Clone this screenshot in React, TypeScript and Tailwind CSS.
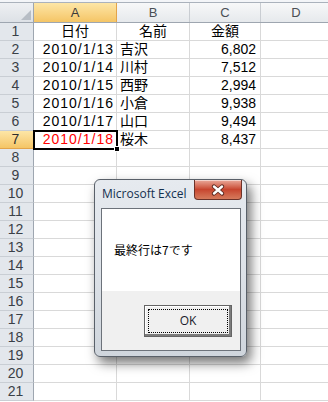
import React from "react";

// Excel 2010 sheet with a Win7-basic MsgBox on top.

const COLS = [
  { key: "A", w: "w-[83px]" },
  { key: "B", w: "w-[73px]" },
  { key: "C", w: "w-[71px]" },
  { key: "D", w: "w-[71px]" },
];

type Row = { date?: string; name?: string; amount?: string; head?: boolean };

const ROWS: Row[] = [
  { date: "日付", name: "名前", amount: "金額", head: true },
  { date: "2010/1/13", name: "吉沢", amount: "6,802" },
  { date: "2010/1/14", name: "川村", amount: "7,512" },
  { date: "2010/1/15", name: "西野", amount: "2,994" },
  { date: "2010/1/16", name: "小倉", amount: "9,938" },
  { date: "2010/1/17", name: "山口", amount: "9,494" },
  { date: "2010/1/18", name: "桜木", amount: "8,437" },
];

const jp = "font-['Liberation_Sans','Noto_Sans_CJK_JP',sans-serif]";

function ColumnHeader() {
  return (
    <div className="flex h-[20px] border-b border-[#9ea6b0]">
      <div className="w-[34px] shrink-0 border-r border-[#9ea6b0] bg-gradient-to-b from-[#eef0f3] to-[#dde1e6] flex items-end justify-end p-[2px]">
        <svg width="10" height="10" viewBox="0 0 10 10">
          <polygon points="10,0 10,10 0,10" fill="#b7bdc5" />
        </svg>
      </div>
      {COLS.map((c) => (
        <div
          key={c.key}
          className={`${c.w} shrink-0 border-r flex items-center justify-center text-[13px] ${
            c.key === "A"
              ? "border-[#e3a44a] bg-gradient-to-b from-[#fde6a6] to-[#f5c565] text-[#3a3a3a]"
              : "border-[#c9cdd2] bg-gradient-to-b from-[#f7f8f9] to-[#e6e9ec] text-[#4a4f55]"
          } font-['Liberation_Sans',sans-serif]`}
        >
          {c.key}
        </div>
      ))}
    </div>
  );
}

function SheetRow({ n, row }: { n: number; row?: Row }) {
  const selected = n === 7;
  return (
    <div className="flex h-[18px]">
      <div
        className={`w-[34px] shrink-0 border-r border-b flex items-center justify-center pr-[2px] text-[14px] font-['Liberation_Sans',sans-serif] ${
          selected
            ? "border-[#e3a44a] bg-gradient-to-b from-[#fde6a6] to-[#f5c565] text-[#2e2e2e]"
            : "border-r-[#9ea6b0] border-b-[#c9ced4] bg-[#e3e7ec] text-[#3a4047]"
        }`}
      >
        {n}
      </div>
      <div
        className={`w-[83px] shrink-0 border-r border-b border-[#d9d9d9] flex items-center text-[14px] ${jp} ${
          row?.head ? "justify-center" : "justify-end pr-[2px] tracking-[1px]"
        } ${selected ? "text-[#ff0000]" : "text-black"}`}
      >
        {row?.date}
      </div>
      <div
        className={`w-[73px] shrink-0 border-r border-b border-[#d9d9d9] flex items-center text-[14px] text-black ${jp} ${
          row?.head ? "justify-center" : "pl-[3px]"
        }`}
      >
        {row?.name}
      </div>
      <div
        className={`w-[71px] shrink-0 border-r border-b border-[#d9d9d9] flex items-center text-[14px] text-black ${jp} ${
          row?.head ? "justify-center" : "justify-end pr-[4px]"
        }`}
      >
        {row?.amount}
      </div>
      <div className="w-[71px] shrink-0 border-r border-b border-[#d9d9d9]" />
    </div>
  );
}

function CloseGlyph() {
  return (
    <svg width="14" height="12" viewBox="0 0 14 12">
      <path d="M3 2.5 L11 9.5 M11 2.5 L3 9.5" stroke="#5a2a22" strokeWidth="4.2" strokeLinecap="round" />
      <path d="M3 2.5 L11 9.5 M11 2.5 L3 9.5" stroke="#ffffff" strokeWidth="2.4" strokeLinecap="round" />
    </svg>
  );
}

function MsgBox() {
  return (
    <div className="absolute left-[94px] top-[179px] w-[153px] h-[178px] rounded-[6px] border border-[#596069] bg-gradient-to-b from-[#e6eaef] via-[#dde2e8] to-[#cfd5dc] shadow-[4px_6px_12px_rgba(0,0,0,0.55)] flex flex-col pl-[6px] pr-[5px] pb-[5px]">
      <div className="h-[28px] flex items-center pl-[1px] text-[12px] text-[#13304f] font-['Open_Sans',sans-serif]">
        Microsoft Excel
      </div>
      <div className="absolute left-[99px] top-0 w-[48px] h-[20px] rounded-b-[4px] border border-t-0 border-[#6b3229] bg-gradient-to-b from-[#e9a99b] via-[#c7452f] to-[#d57a5c] shadow-[inset_0_1px_0_rgba(255,255,255,0.5)] flex items-center justify-center">
        <CloseGlyph />
      </div>
      <div className="flex-1 border border-[#6c727a] bg-white flex flex-col">
        <div className="h-[82px] flex items-center pl-[12px] text-[12px] text-black font-['Noto_Sans_CJK_JP',sans-serif]">
          最終行は7です
        </div>
        <div className="flex-1 bg-[#f0f0f0] flex items-center justify-end pr-[8px]">
          <div className="w-[88px] h-[32px] border border-[#646464] bg-[#f0f0f0] shadow-[inset_-2px_-2px_0_#7c7c7c,inset_1px_1px_0_#ffffff] p-[3px]">
            <div className="h-full border border-dotted border-black flex items-center justify-center text-[12px] text-[#1a1a2a] font-['Open_Sans',sans-serif]">
              OK
            </div>
          </div>
        </div>
      </div>
    </div>
  );
}

export default function App() {
  const rows = Array.from({ length: 21 }, (_, i) => i + 1);
  return (
    <div className="relative w-[328px] h-[402px] overflow-hidden bg-white">
      <div className="h-[3px] bg-[#f3f5f8] border-b border-[#aab2bc]" />
      <ColumnHeader />
      {rows.map((n) => (
        <SheetRow key={n} n={n} row={ROWS[n - 1]} />
      ))}
      {/* active cell A7 */}
      <div className="absolute left-[33px] top-[130px] w-[85px] h-[20px] border-2 border-black" />
      <div className="absolute left-[114px] top-[146px] w-[6px] h-[6px] bg-black border border-white" />
      <MsgBox />
    </div>
  );
}
